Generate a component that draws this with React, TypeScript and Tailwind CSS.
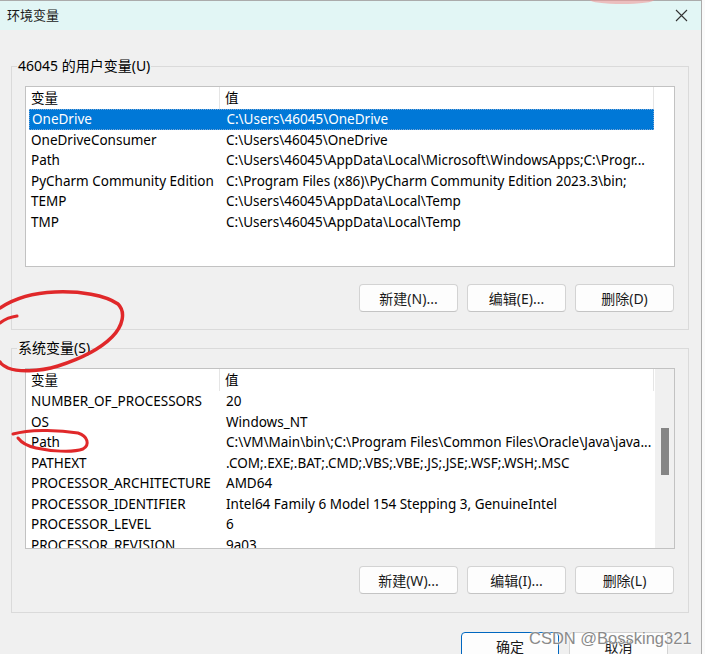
import React from "react";

type Row = [string, string];

const userRows: Row[] = [
  ["OneDrive", "C:\\Users\\46045\\OneDrive"],
  ["OneDriveConsumer", "C:\\Users\\46045\\OneDrive"],
  ["Path", "C:\\Users\\46045\\AppData\\Local\\Microsoft\\WindowsApps;C:\\Progr..."],
  ["PyCharm Community Edition", "C:\\Program Files (x86)\\PyCharm Community Edition 2023.3\\bin;"],
  ["TEMP", "C:\\Users\\46045\\AppData\\Local\\Temp"],
  ["TMP", "C:\\Users\\46045\\AppData\\Local\\Temp"],
];

const sysRows: Row[] = [
  ["NUMBER_OF_PROCESSORS", "20"],
  ["OS", "Windows_NT"],
  ["Path", "C:\\VM\\Main\\bin\\;C:\\Program Files\\Common Files\\Oracle\\Java\\java..."],
  ["PATHEXT", ".COM;.EXE;.BAT;.CMD;.VBS;.VBE;.JS;.JSE;.WSF;.WSH;.MSC"],
  ["PROCESSOR_ARCHITECTURE", "AMD64"],
  ["PROCESSOR_IDENTIFIER", "Intel64 Family 6 Model 154 Stepping 3, GenuineIntel"],
  ["PROCESSOR_LEVEL", "6"],
  ["PROCESSOR_REVISION", "9a03"],
];

const ListView = ({ rows, selected, scroll }: { rows: Row[]; selected?: number; scroll?: boolean }): JSX.Element => (
  <div className="ml-[13px] mt-[10px] flex h-[181px] w-[650px] overflow-hidden border border-[#c2c2c2] bg-white">
    <div className="flex flex-1 flex-col">
      <div className="ml-[3px] flex h-[22px] shrink-0">
        <div className="flex w-[191px] items-center border-r border-[#e5e5e5] pl-[2px]">变量</div>
        <div className="flex w-[434px] items-center border-r border-[#e5e5e5] pl-[5px]">值</div>
      </div>
      {rows.map(([name, value], i) => (
        <div
          key={name + i}
          className={
            i === selected
              ? "ml-[3px] flex h-[20.5px] w-[625px] shrink-0 items-center border border-dotted border-[#7aa7d6] bg-[#0078d7] text-white"
              : "ml-[3px] flex h-[20.5px] w-[625px] shrink-0 items-center"
          }
        >
          <div className="w-[191px] overflow-hidden whitespace-nowrap pl-[2px]">{name}</div>
          <div className="w-[434px] overflow-hidden whitespace-nowrap pl-[6px]">{value}</div>
        </div>
      ))}
    </div>
    {scroll && (
      <div className="w-[19px] shrink-0 bg-[#f0f0f0]">
        <div className="ml-[6px] mt-[59px] h-[47px] w-[8px] bg-[#858585]" />
      </div>
    )}
  </div>
);

const Btn = ({ label, primary }: { label: string; primary?: boolean }): JSX.Element => (
  <button
    className={
      primary
        ? "h-[28px] w-[98px] shrink-0 rounded-[4px] border border-[#0067c0] bg-[#fdfdfd] text-[14px] text-[#1a1a1a]"
        : "h-[28px] w-[99px] shrink-0 rounded-[4px] border border-[#d3d3d3] border-b-[#c4c4c4] bg-[#fdfdfd] text-[14px] text-[#1a1a1a]"
    }
  >
    {label}
  </button>
);

const Group = ({
  title,
  children,
  className,
}: {
  title: string;
  children: React.ReactNode;
  className: string;
}): JSX.Element => (
  <div className={"ml-[11px] w-[678px] shrink-0 border border-[#dadada] " + className}>
    <div className="-mt-[11px] ml-[5px] w-fit bg-[#f0f0f0] px-[1px] text-[14px] leading-[20px]">{title}</div>
    {children}
  </div>
);

export default function App(): JSX.Element {
  return (
    <div className="relative h-[654px] w-[705px] overflow-hidden bg-[#fafafa] font-['Noto_Sans','Noto_Sans_CJK_SC',sans-serif] text-[13.5px] text-black">
      <div className="flex h-full w-[702px] flex-col border-r border-t border-[#ababab] bg-[#f0f0f0]">
        <div className="flex h-[29px] shrink-0 items-center justify-between bg-[#e2f6f5] pl-[7px] pr-[13px]">
          <span className="text-[13px] text-[#1a1a1a]">环境变量</span>
          <svg width="13" height="13" viewBox="0 0 13 13">
            <path d="M1 1 L12 12 M12 1 L1 12" stroke="#333" strokeWidth="1.1" />
          </svg>
        </div>

        <Group title="46045 的用户变量(U)" className="mt-[36px] h-[264px]">
          <ListView rows={userRows} selected={0} />
          <div className="mr-[14px] mt-[17px] flex justify-end gap-[9px]">
            <Btn label="新建(N)..." />
            <Btn label="编辑(E)..." />
            <Btn label="删除(D)" />
          </div>
        </Group>

        <Group title="系统变量(S)" className="mt-[18px] h-[265px]">
          <ListView rows={sysRows} scroll />
          <div className="mr-[14px] mt-[17px] flex justify-end gap-[9px]">
            <Btn label="新建(W)..." />
            <Btn label="编辑(I)..." />
            <Btn label="删除(L)" />
          </div>
        </Group>

        <div className="mr-[33px] mt-[19px] flex shrink-0 justify-end gap-[10px]">
          <Btn label="确定" primary />
          <Btn label="取消" />
        </div>
      </div>

      {/* red pen marks */}
      <svg className="pointer-events-none absolute left-0 top-0" width="705" height="654" viewBox="0 0 705 654">
        <ellipse cx="622" cy="0" rx="32" ry="4" fill="#f19a9a" opacity="0.6" />
        <path
          d="M0 308 C 12 300, 30 293, 55 292 C 80 291, 105 295, 118 304 C 126 312, 123 326, 112 337 C 100 349, 80 359, 58 366 C 38 372, 18 372, 8 368 C 4 366, 1 364, 0 362"
          fill="none"
          stroke="#e0282a"
          strokeWidth="3.5"
          strokeLinecap="round"
        />
        <path d="M17 316 C 10 317, 5 319, 0 323" fill="none" stroke="#e0282a" strokeWidth="3" strokeLinecap="round" />
        <path
          d="M13 434 C 28 430, 55 429, 78 433 C 88 436, 90 445, 83 449 C 72 453, 50 451, 36 448 C 27 446, 21 442, 18 438"
          fill="none"
          stroke="#e0282a"
          strokeWidth="3"
          strokeLinecap="round"
        />
      </svg>

      <div className="pointer-events-none absolute left-[529px] top-[626px] font-['Liberation_Sans',sans-serif] text-[16.5px] text-[#8a8a8a] [text-shadow:0_0_2px_#fff,0_0_2px_#fff]">
        CSDN @Bossking321
      </div>
    </div>
  );
}
